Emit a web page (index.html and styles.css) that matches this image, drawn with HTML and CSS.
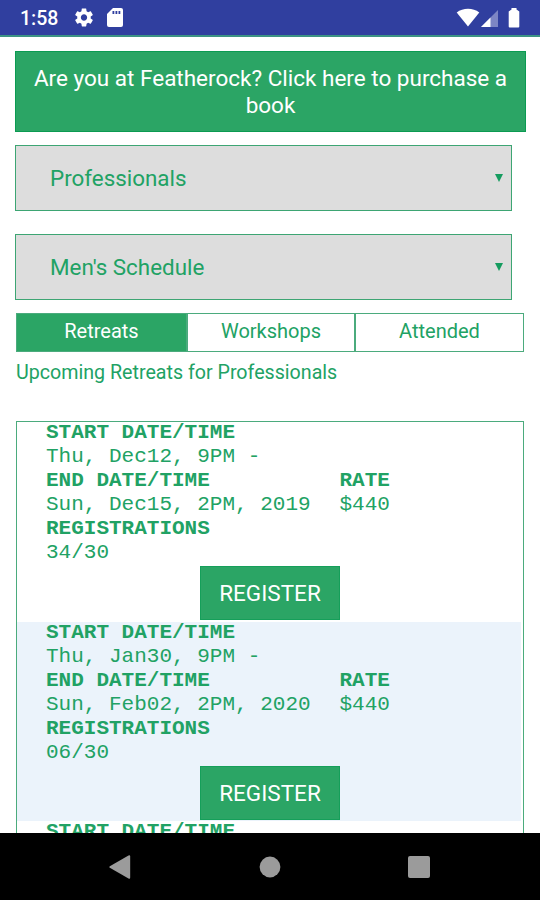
FILE: index.html
```html
<!DOCTYPE html>
<html lang="en">
<head>
    <meta charset="UTF-8">
    <meta name="viewport" content="width=device-width, initial-scale=1.0">
    <title>Retreats</title>
    <link rel="stylesheet" href="styles.css">
</head>
<body>

<!-- Status bar -->
<header class="status-bar">
    <span class="clock">1:58</span>
    <svg class="icon-gear" width="18" height="19" viewBox="2 2 20 20"><path fill="#fff" d="M19.43 12.98c.04-.32.07-.64.07-.98s-.03-.66-.07-.98l2.11-1.65c.19-.15.24-.42.12-.64l-2-3.46c-.12-.22-.39-.3-.61-.22l-2.49 1c-.52-.4-1.08-.73-1.69-.98l-.38-2.65C14.46 2.18 14.25 2 14 2h-4c-.25 0-.46.18-.49.42l-.38 2.65c-.61.25-1.17.59-1.69.98l-2.49-1c-.23-.09-.49 0-.61.22l-2 3.46c-.13.22-.07.49.12.64l2.11 1.65c-.04.32-.07.65-.07.98s.03.66.07.98l-2.11 1.65c-.19.15-.24.42-.12.64l2 3.46c.12.22.39.3.61.22l2.49-1c.52.4 1.08.73 1.69.98l.38 2.65c.03.24.24.42.49.42h4c.25 0 .46-.18.49-.42l.38-2.65c.61-.25 1.17-.59 1.69-.98l2.49 1c.23.09.49 0 .61-.22l2-3.46c.12-.22.07-.49-.12-.64l-2.11-1.65zM12 15.5c-1.93 0-3.5-1.57-3.5-3.5s1.57-3.5 3.5-3.5 3.5 1.57 3.5 3.5-1.57 3.5-3.5 3.5z"/></svg>
    <svg class="icon-card" width="16" height="19" viewBox="0 0 16 19"><path fill="#fff" d="M6 0h8q2 0 2 2v15q0 2-2 2H2q-2 0-2-2V6z"/><path fill="#303f9f" d="M5.500 3h1.800v3H5.500zM8.500 3h1.800v3H8.500zM11.500 3h1.800v3h-1.800z"/></svg>
    <svg class="icon-wifi" width="24" height="19" viewBox="0 0 24 19"><path fill="#fff" d="M12 18.500 .7 4.500C4 1.900 7.800 .8 12 .8s8 1.100 11.300 3.700z"/></svg>
    <svg class="icon-signal" width="17" height="17" viewBox="0 0 17 17"><path fill="#7d86c4" d="M0 17 17 0v17z"/><path fill="#fff" d="M0 17 9.500 7.500V17z"/></svg>
    <svg class="icon-battery" width="12" height="20" viewBox="0 0 12 20"><path fill="#fff" d="M3.500 0h5v1.500L11.300 3.500v15q0 1-1 1H1.700q-1 0-1-1v-15L3.500 1.500z"/></svg>
</header>

<main class="content">
    <a class="banner">Are you at Featherock? Click here to purchase a book</a>

    <div class="select">Professionals<i class="arrow"></i></div>
    <div class="select">Men's Schedule<i class="arrow"></i></div>

    <nav class="tabs">
        <span class="tab active">Retreats</span>
        <span class="tab">Workshops</span>
        <span class="tab">Attended</span>
    </nav>

    <p class="caption">Upcoming Retreats for Professionals</p>

    <!-- Retreat list -->
    <div class="list">
        <section class="item">
            <div class="details">
                <div class="dates">
                    <b>START DATE/TIME</b>
                    <span>Thu, Dec12, 9PM -</span>
                    <b>END DATE/TIME</b>
                    <span>Sun, Dec15, 2PM, 2019</span>
                    <b>REGISTRATIONS</b>
                    <span>34/30</span>
                </div>
                <div class="rate">
                    <b>RATE</b>
                    <span>$440</span>
                </div>
            </div>
            <button class="register">REGISTER</button>
        </section>
        <section class="item">
            <div class="details">
                <div class="dates">
                    <b>START DATE/TIME</b>
                    <span>Thu, Jan30, 9PM -</span>
                    <b>END DATE/TIME</b>
                    <span>Sun, Feb02, 2PM, 2020</span>
                    <b>REGISTRATIONS</b>
                    <span>06/30</span>
                </div>
                <div class="rate">
                    <b>RATE</b>
                    <span>$440</span>
                </div>
            </div>
            <button class="register">REGISTER</button>
        </section>
        <section class="item">
            <div class="details">
                <div class="dates">
                    <b>START DATE/TIME</b>
                </div>
            </div>
        </section>
    </div>
</main>

<!-- Navigation bar -->
<footer class="nav-bar">
    <svg width="22" height="24" viewBox="0 0 22 24"><path fill="#9b9b9b" d="M.8 11.200 19.500 .5q1.700-.7 1.700 1v21q0 1.700-1.700 1L.8 12.800q-1-.8 0-1.600z"/></svg>
    <svg width="22" height="22" viewBox="0 0 22 22"><circle cx="11" cy="11" r="10.400" fill="#9b9b9b"/></svg>
    <svg width="22" height="22" viewBox="0 0 22 22"><rect width="22" height="22" rx="2" fill="#9b9b9b"/></svg>
</footer>

</body>
</html>
```

FILE: styles.css
```css
* {
    box-sizing: border-box;
}
body {
    display: flex;
    flex-direction: column;
    height: 900px;
    margin: 0;
    overflow: hidden;
    background-color: #fff;
    color: #21a264;
    font-family: Roboto, sans-serif;
}

/* Status bar */
.status-bar {
    display: flex;
    flex: none;
    align-items: center;
    height: 37px;
    padding: 0 20px;
    background-color: #303f9f;
    border-bottom: 2px solid #3c9384;
}
.clock {
    width: 55px;
    padding-top: 1px;
    color: #fff;
    font-size: 19.5px;
    font-weight: 500;
}
.icon-card {
    margin-left: 14px;
}
.icon-wifi {
    margin-left: auto;
    margin-right: 1px;
}
.icon-signal {
    margin-top: 2px;
}
.icon-battery {
    margin-left: 10px;
}

.content {
    flex: 1;
    min-height: 0;
    padding: 14px 14px 0 15px;
    overflow: hidden;
}
.banner {
    display: block;
    height: 81px;
    padding: 13px 15px;
    background-color: #2ba565;
    border: 1px solid #0b9b52;
    color: #fff;
    font-size: 22.5px;
    line-height: 27px;
    text-align: center;
}

.select {
    display: flex;
    align-items: center;
    justify-content: space-between;
    width: 497px;
    height: 66px;
    margin-top: 13px;
    padding: 0 8px 0 34px;
    background-color: #ddd;
    border: 1px solid #3da573;
    font-size: 22.4px;
}
.select + .select {
    margin-top: 23px;
}
.arrow {
    border: 4px solid transparent;
    border-top: 8px solid #159c5f;
    border-bottom: 0;
}

.tabs {
    display: grid;
    grid-template-columns: 171px 168px 169px;
    width: 508px;
    height: 39px;
    margin: 13px 0 0 1px;
}
.tab {
    border: 1px solid #4bab7d;
    font-size: 20px;
    line-height: 35px;
    text-align: center;
}
.active {
    background-color: #2ba565;
    color: #fff;
}
.caption {
    margin: 9px 0 36px 1px;
    font-size: 19.65px;
    line-height: 24px;
}

/* Retreat list */
.list {
    width: 508px;
    height: 500px;
    margin-left: 1px;
    border: 1px solid #4bab7d;
}
.item {
    display: flow-root;
    height: 199.5px;
    margin-right: 2px;
    padding-left: 29px;
}
.item:nth-child(even) {
    background-color: #ebf3fb;
}
.details {
    display: flex;
    margin-top: -1px;
    padding-bottom: 1px;
    font-family: "Liberation Mono", monospace;
    font-size: 21px;
    line-height: 24px;
}
.dates,
.rate {
    display: flex;
    flex-direction: column;
}
.dates {
    width: 293.5px;
}
.rate {
    padding-top: 48px;
}
.register {
    display: block;
    width: 140px;
    height: 54px;
    margin-left: 154px;
    padding: 0;
    background-color: #2ba565;
    border: 1px solid #159f5a;
    color: #fff;
    font-family: Roboto, sans-serif;
    font-size: 22.5px;
}

/* Navigation bar */
.nav-bar {
    display: flex;
    flex: none;
    align-items: center;
    justify-content: space-between;
    height: 67px;
    padding: 0 110px 0 109px;
    background-color: #000;
}
```
